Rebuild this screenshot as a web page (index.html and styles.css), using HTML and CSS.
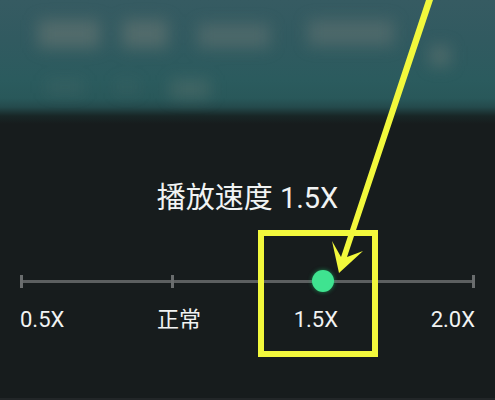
FILE: index.html
```html
<!DOCTYPE html>
<html lang="zh-CN">
<head>
    <meta charset="UTF-8">
    <meta name="viewport" content="width=device-width, initial-scale=1.0">
    <title>播放速度</title>
    <link rel="stylesheet" href="styles.css">
</head>
<body>

<div class="backdrop">
    <svg class="backdrop-shapes" viewBox="0 0 495 120" preserveAspectRatio="none" aria-hidden="true">
        <g fill="#8d8a80">
            <rect x="38" y="20" width="62" height="28" opacity="0.36"/>
            <rect x="122" y="20" width="46" height="28" opacity="0.36"/>
            <rect x="198" y="24" width="72" height="24" opacity="0.3"/>
            <rect x="308" y="20" width="86" height="26" opacity="0.3"/>
            <rect x="430" y="46" width="20" height="20" opacity="0.35"/>
            <rect x="46" y="80" width="38" height="14" opacity="0.12"/>
            <rect x="115" y="80" width="24" height="14" opacity="0.1"/>
            <rect x="170" y="80" width="40" height="18" opacity="0.25"/>
        </g>
    </svg>
</div>

<main class="panel">
    <label class="title" for="speed">播放速度 1.5X</label>

    <div class="slider">
        <div class="ticks">
            <span></span>
            <span></span>
            <span></span>
            <span></span>
        </div>
        <input type="range" id="speed" min="0.5" max="2" step="0.5" value="1.5">
    </div>

    <div class="labels">
        <span>0.5X</span>
        <span>正常</span>
        <span>1.5X</span>
        <span>2.0X</span>
    </div>
</main>

<!-- Highlight box and arrow over the selected speed -->
<svg class="marker" viewBox="0 0 495 400" aria-hidden="true">
    <rect x="261" y="233" width="114" height="121" fill="none" stroke="#f2f83c" stroke-width="6"/>
    <path d="M426 0h7L347 257l16-6-24 22-7-32 9 16z" fill="#f2f83c"/>
</svg>

</body>
</html>
```

FILE: styles.css
```css
body {
    margin: 0;
    min-height: 100vh;
    display: flex;
    flex-direction: column;
    position: relative;
    box-sizing: border-box;
    background: #171c1d;
    border-bottom: 2px solid #222628;
    color: #f1f3f3;
    font-family: Roboto, "Noto Sans CJK SC", sans-serif;
    overflow: hidden;
}

.backdrop {
    height: 124px;
    background: linear-gradient(#365b62 0, #315a60 40px, #2b5b5e 80px, #29585a 98px, #244a4c 107px, #182626 116px, #171c1d 124px);
}

.backdrop-shapes {
    display: block;
    width: 100%;
    height: 120px;
    filter: blur(8px);
}

.panel {
    padding: 54px 20px 0;
    display: flex;
    flex-direction: column;
}

.title {
    font-size: 29px;
    line-height: 40px;
    text-align: center;
}

.slider {
    position: relative;
    height: 24px;
    margin-top: 51px;
    display: flex;
    align-items: center;
}

/* Track line with a tick for each speed */
.ticks {
    flex: 1;
    height: 13px;
    display: flex;
    justify-content: space-between;
    background: linear-gradient(#5c5f60, #5c5f60) center / 100% 3px no-repeat;
}

.ticks span {
    width: 3px;
    background: #6a6d6e;
}

/* Half a thumb wider than the track on each side */
#speed {
    position: absolute;
    top: 0;
    left: -10px;
    width: calc(100% + 20px);
    height: 24px;
    margin: 0;
    background: transparent;
    appearance: none;
    -webkit-appearance: none;
    cursor: pointer;
}

#speed::-webkit-slider-thumb {
    -webkit-appearance: none;
    width: 22px;
    height: 22px;
    border-radius: 50%;
    background: #3fe390;
    box-shadow: 0 0 4px rgba(30, 200, 110, 0.6);
}

.labels {
    margin-top: 11px;
    display: flex;
    justify-content: space-between;
    font-size: 22px;
    line-height: 32px;
}

.marker {
    position: absolute;
    top: 0;
    left: 0;
    width: 100%;
    pointer-events: none;
}
```
